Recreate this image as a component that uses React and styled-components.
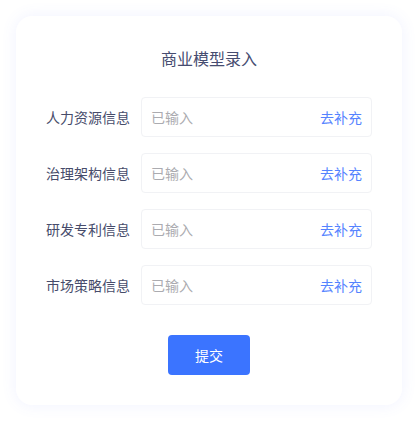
import styled, { createGlobalStyle } from 'styled-components';

const GlobalStyle = createGlobalStyle`
  html, body {
    margin: 0;
    padding: 0;
    background: #ffffff;
    font-family: "Noto Sans CJK SC", "Noto Sans", sans-serif;
  }
`;

const Page = styled.div`
  padding: 16px;
`;

const Card = styled.div`
  width: 386px;
  box-sizing: border-box;
  background: #ffffff;
  border-radius: 16px;
  box-shadow: 0 0 16px rgba(90, 110, 255, 0.09);
  padding: 30px 30px 30px;
  display: flex;
  flex-direction: column;
  align-items: stretch;
`;

const Title = styled.h2`
  margin: 0 0 27px;
  font-size: 16px;
  font-weight: 400;
  line-height: 24px;
  text-align: center;
  color: #464c70;
`;

const Rows = styled.div`
  display: flex;
  flex-direction: column;
  gap: 16px;
`;

const Row = styled.div`
  display: flex;
  align-items: center;
  gap: 11px;
`;

const Label = styled.span`
  width: 84px;
  flex-shrink: 0;
  font-size: 14px;
  color: #474c6b;
  white-space: nowrap;
`;

const Field = styled.div`
  flex: 1;
  height: 40px;
  box-sizing: border-box;
  border: 1px solid #f1f2f5;
  border-radius: 4px;
  display: flex;
  align-items: center;
  justify-content: space-between;
  padding: 0 9px 0 9px;
  font-size: 14px;
`;

const Placeholder = styled.span`
  color: #ababb0;
`;

const Action = styled.span`
  color: #5583ff;
  cursor: pointer;
`;

const Submit = styled.button`
  align-self: center;
  margin-top: 30px;
  width: 82px;
  height: 40px;
  border: none;
  border-radius: 4px;
  background: #3b74ff;
  color: #ffffff;
  font-family: inherit;
  font-size: 14px;
  cursor: pointer;
`;

const fields = ['人力资源信息', '治理架构信息', '研发专利信息', '市场策略信息'];

export default function App() {
  return (
    <Page>
      <GlobalStyle />
      <Card>
        <Title>商业模型录入</Title>
        <Rows>
          {fields.map((name) => (
            <Row key={name}>
              <Label>{name}</Label>
              <Field>
                <Placeholder>已输入</Placeholder>
                <Action>去补充</Action>
              </Field>
            </Row>
          ))}
        </Rows>
        <Submit>提交</Submit>
      </Card>
    </Page>
  );
}
